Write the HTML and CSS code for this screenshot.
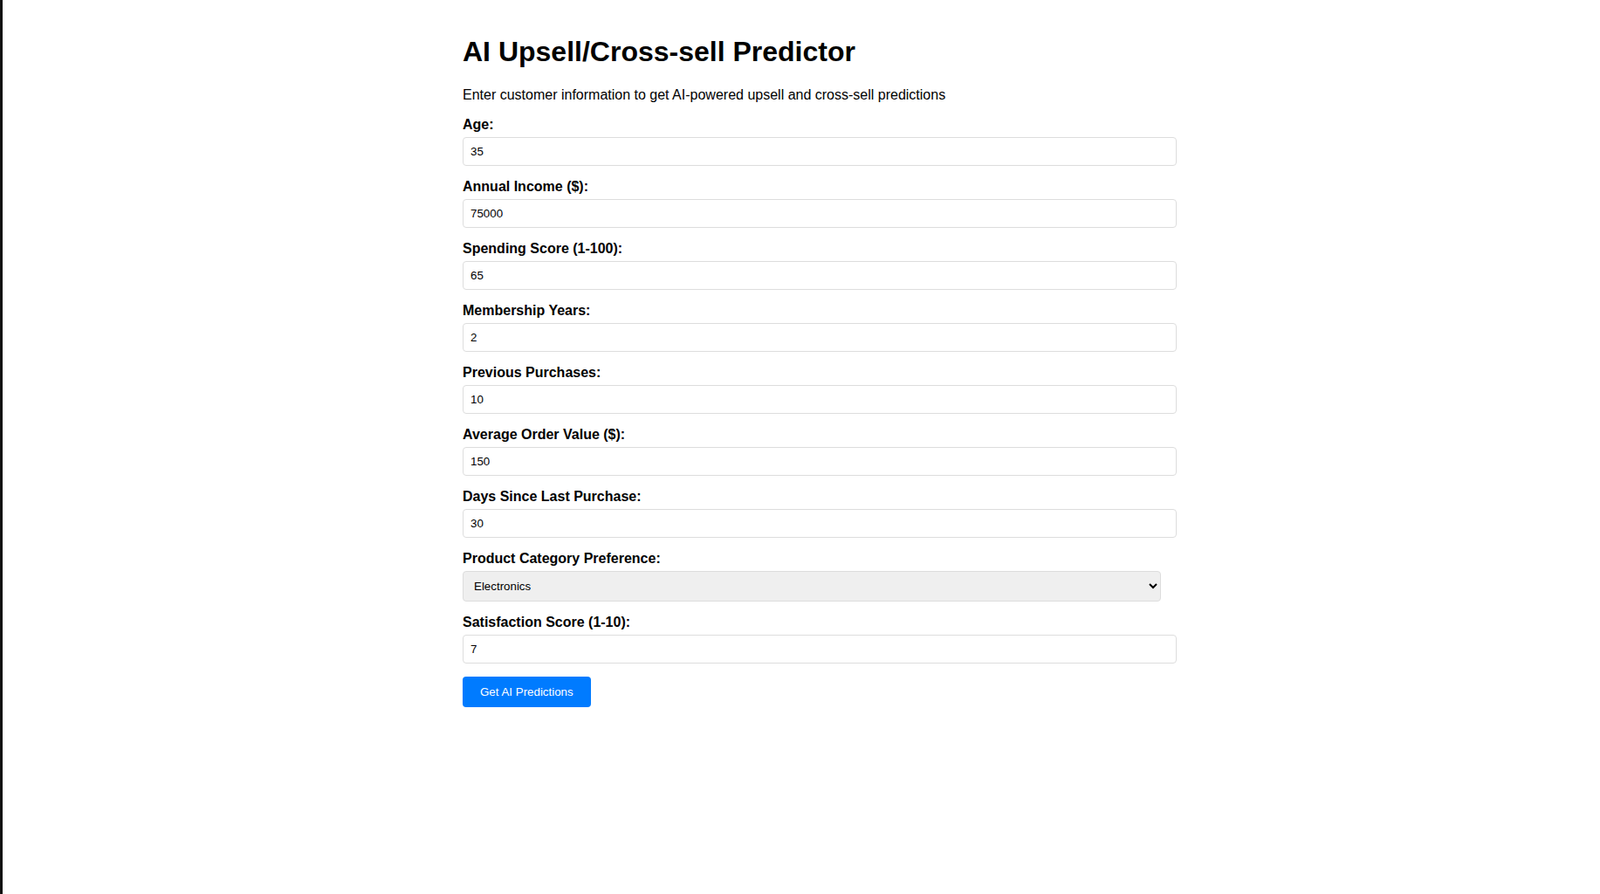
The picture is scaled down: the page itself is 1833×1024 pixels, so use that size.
FILE: index.html
```html
<!DOCTYPE html>
<html lang="en">
<head>
<meta charset="utf-8">
<title>AI Upsell/Cross-sell Predictor</title>
<link rel="stylesheet" href="styles.css">
</head>
<body>
<div class="page">
  <div class="container">
    <h1 class="title">AI Upsell/Cross-sell Predictor</h1>
    <p class="subtitle">Enter customer information to get AI-powered upsell and cross-sell predictions</p>
    <form class="form">
      <div class="form-group">
        <label class="label" for="age">Age:</label>
        <input class="field" id="age" type="number" value="35">
      </div>
      <div class="form-group">
        <label class="label" for="income">Annual Income ($):</label>
        <input class="field" id="income" type="number" value="75000">
      </div>
      <div class="form-group">
        <label class="label" for="spending">Spending Score (1-100):</label>
        <input class="field" id="spending" type="number" value="65">
      </div>
      <div class="form-group">
        <label class="label" for="membership">Membership Years:</label>
        <input class="field" id="membership" type="number" value="2">
      </div>
      <div class="form-group">
        <label class="label" for="purchases">Previous Purchases:</label>
        <input class="field" id="purchases" type="number" value="10">
      </div>
      <div class="form-group">
        <label class="label" for="aov">Average Order Value ($):</label>
        <input class="field" id="aov" type="number" value="150">
      </div>
      <div class="form-group">
        <label class="label" for="days">Days Since Last Purchase:</label>
        <input class="field" id="days" type="number" value="30">
      </div>
      <div class="form-group">
        <label class="label" for="category">Product Category Preference:</label>
        <select class="select" id="category">
          <option>Electronics</option>
          <option>Clothing</option>
          <option>Home &amp; Garden</option>
          <option>Sports</option>
          <option>Books</option>
        </select>
      </div>
      <div class="form-group">
        <label class="label" for="satisfaction">Satisfaction Score (1-10):</label>
        <input class="field" id="satisfaction" type="number" value="7">
      </div>
      <button class="button" type="button">Get AI Predictions</button>
    </form>
  </div>
</div>
</body>
</html>
```
FILE: styles.css
```css
html, body {
  margin: 0;
  padding: 0;
  background: #fff;
}

body {
  font-family: "Liberation Sans", Arial, sans-serif;
  color: #000;
}

.page {
  min-height: 100vh;
  box-sizing: border-box;
  border-left: 3px solid #111;
  padding: 20px 0 0 24px;
}

.container {
  max-width: 800px;
  margin: 0 auto;
}

.title {
  font-size: 32px;
  font-weight: bold;
  margin: 21.44px 0;
}

.subtitle {
  font-size: 16px;
  margin: 16px 0;
}

.form-group {
  margin-bottom: 15px;
}

.label {
  display: block;
  font-weight: bold;
  font-size: 16px;
  margin-bottom: 5px;
}

.field {
  display: block;
  width: 100%;
  padding: 8px;
  border: 1px solid #ddd;
  border-radius: 4px;
  font-family: "Liberation Sans", Arial, sans-serif;
  font-size: 13.333px;
  color: #000;
  background: #fff;
  margin: 0;
  -moz-appearance: textfield;
}

.field::-webkit-outer-spin-button,
.field::-webkit-inner-spin-button {
  -webkit-appearance: none;
  margin: 0;
}

.select {
  display: block;
  width: 100%;
  box-sizing: border-box;
  padding: 8px;
  height: 35px;
  border: 1px solid #ddd;
  border-radius: 4px;
  background-color: #efefef;
  font-family: "Liberation Sans", Arial, sans-serif;
  font-size: 13.333px;
  color: #000;
  margin: 0;
}

.button {
  margin: 0;
  padding: 10px 20px;
  background: #007bff;
  color: #fff;
  border: none;
  border-radius: 4px;
  font-family: "Liberation Sans", Arial, sans-serif;
  font-size: 13.333px;
  cursor: pointer;
}
```
